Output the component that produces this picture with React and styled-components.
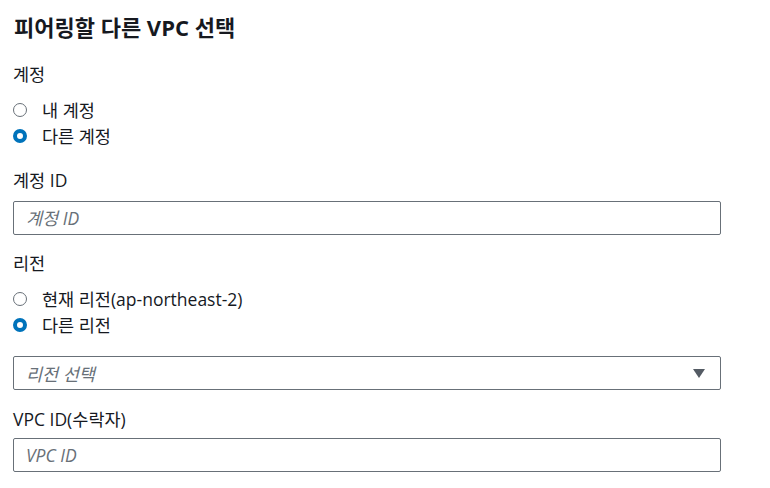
import styled, { createGlobalStyle } from "styled-components";

const GlobalStyle = createGlobalStyle`
    body {
        margin: 0;
        background: #ffffff;
        font-family: "Open Sans", "Noto Sans CJK KR", sans-serif;
        color: #16191f;
    }
`;

export default function App() {
    return (
        <>
            <GlobalStyle />
            <Page>
                <Title>피어링할 다른 VPC 선택</Title>

                <Field>
                    <Label>계정</Label>
                    <RadioGroup>
                        <Radio label="내 계정" />
                        <Radio label="다른 계정" checked />
                    </RadioGroup>
                </Field>

                <Field $top={22}>
                    <Label>계정 ID</Label>
                    <Input $top={10} placeholder="계정 ID" />
                </Field>

                <Field $top={17}>
                    <Label>리전</Label>
                    <RadioGroup>
                        <Radio label="현재 리전(ap-northeast-2)" />
                        <Radio label="다른 리전" checked />
                    </RadioGroup>
                    <Select>
                        <Placeholder>리전 선택</Placeholder>
                        <svg width="12" height="9" viewBox="0 0 12 9">
                            <polygon points="0,0 12,0 6,9" fill="#545b64" />
                        </svg>
                    </Select>
                </Field>

                <Field $top={18}>
                    <Label>VPC ID(수락자)</Label>
                    <Input $top={8} placeholder="VPC ID" />
                </Field>
            </Page>
        </>
    );
}

function Radio({ label, checked }) {
    return (
        <RadioRow>
            <RadioCircle $checked={checked} />
            {label}
        </RadioRow>
    );
}

const Page = styled.div`
    width: 708px;
    padding: 14px 49px 0 13px;
    display: flex;
    flex-direction: column;
`;

const Title = styled.h2`
    margin: 0 0 23px 1px;
    font-size: 22px;
    font-weight: 700;
    line-height: 26px;
`;

const Field = styled.div`
    display: flex;
    flex-direction: column;
    margin-top: ${(p) => p.$top || 0}px;
`;

const Label = styled.div`
    font-size: 17.5px;
    line-height: 22px;
`;

const RadioGroup = styled.div`
    display: flex;
    flex-direction: column;
    gap: 4px;
    margin-top: 14px;
`;

const RadioRow = styled.div`
    display: flex;
    align-items: center;
    gap: 15px;
    font-size: 17.5px;
    line-height: 22px;
`;

const RadioCircle = styled.span`
    box-sizing: border-box;
    width: 14px;
    height: 14px;
    border-radius: 50%;
    background: #ffffff;
    border: ${(p) => (p.$checked ? "4.5px solid #0073bb" : "1.5px solid #687078")};
`;

const Input = styled.input`
    box-sizing: border-box;
    margin-top: ${(p) => p.$top || 0}px;
    width: 100%;
    height: 34px;
    padding: 0 12px;
    border: 1px solid #687078;
    border-radius: 2px;
    font-family: inherit;
    font-size: 17.5px;
    color: #16191f;
    outline: none;

    &::placeholder {
        color: #687078;
        font-style: italic;
    }
`;

const Select = styled.div`
    box-sizing: border-box;
    margin-top: 20px;
    width: 100%;
    height: 34px;
    padding: 0 15px 0 12px;
    border: 1px solid #687078;
    border-radius: 2px;
    display: flex;
    align-items: center;
    justify-content: space-between;
`;

const Placeholder = styled.span`
    color: #687078;
    font-style: italic;
    font-size: 17.5px;
`;
